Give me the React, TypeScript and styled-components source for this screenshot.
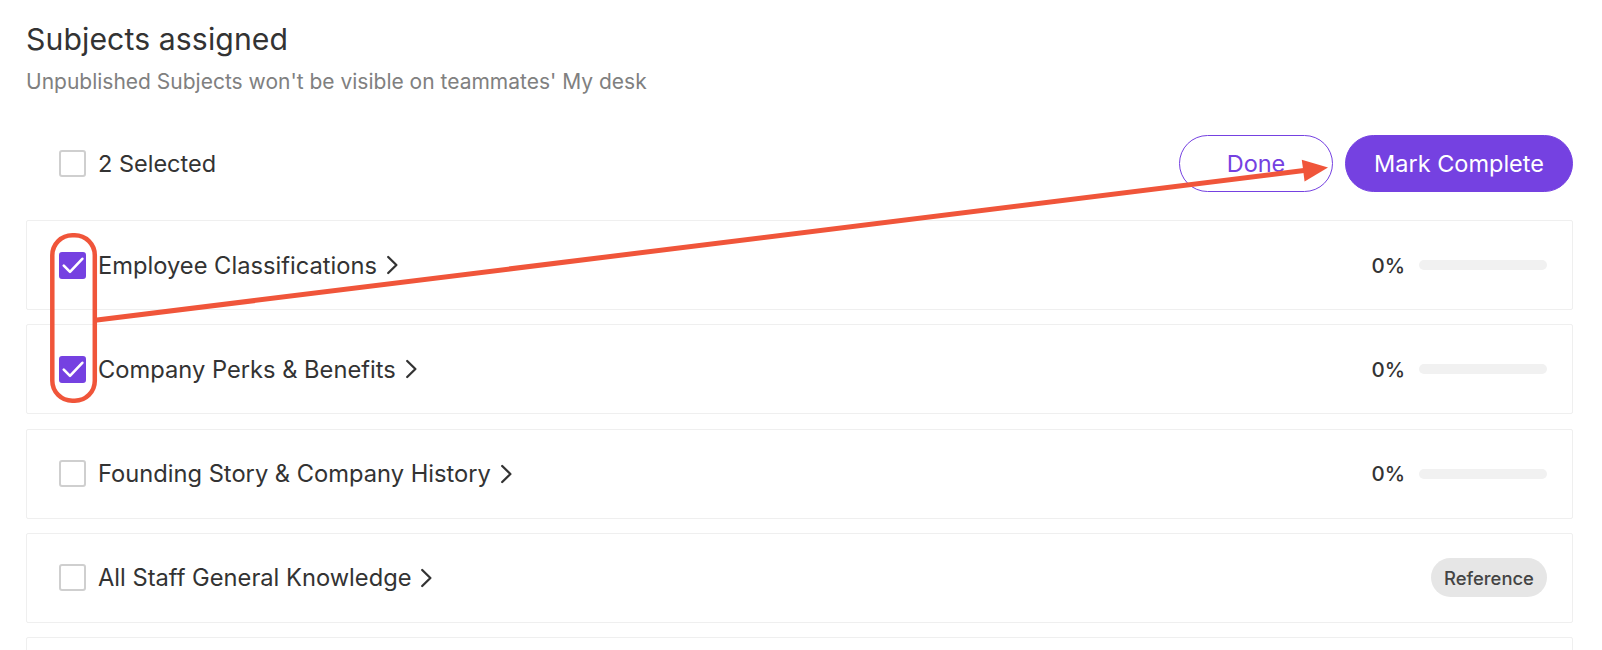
import React from "react";
import styled, { createGlobalStyle } from "styled-components";

const GlobalStyle = createGlobalStyle`
  html, body { margin: 0; padding: 0; background: #ffffff; }
  body { font-family: "Inter", "Noto Sans", sans-serif; color: #333333; }
  * { box-sizing: border-box; }
`;

const Page = styled.div`
  position: relative;
  padding: 21px 29px 0 26px;
  height: 650px;
  overflow: hidden;
`;

const Title = styled.h1`
  margin: 0;
  font-size: 30.2px;
  line-height: 36px;
  font-weight: 400;
  color: #333333;
  letter-spacing: 0.1px;
`;

const Subtitle = styled.p`
  margin: 11px 0 0;
  font-size: 21px;
  line-height: 28px;
  font-weight: 400;
  color: #808080;
`;

const Toolbar = styled.div`
  display: flex;
  align-items: center;
  justify-content: space-between;
  margin-top: 39px;
  padding-left: 33px;
  height: 57px;
`;

const SelectAll = styled.label`
  display: flex;
  align-items: center;
  gap: 12px;
  font-size: 23.5px;
  color: #333333;
`;

const Box = styled.span<{ $checked?: boolean }>`
  display: inline-flex;
  align-items: center;
  justify-content: center;
  flex: 0 0 auto;
  width: 27px;
  height: 27px;
  border-radius: 3px;
  border: 2px solid ${(p) => (p.$checked ? "#7541e1" : "#cfcfcf")};
  background: ${(p) => (p.$checked ? "#7541e1" : "#ffffff")};
`;

const Actions = styled.div`
  display: flex;
  align-items: center;
  gap: 12px;
`;

const PillButton = styled.button<{ $primary?: boolean }>`
  height: 57px;
  border-radius: 29px;
  font-family: inherit;
  font-size: 23.5px;
  font-weight: 400;
  cursor: pointer;
  border: 1px solid #7541e1;
  background: ${(p) => (p.$primary ? "#7541e1" : "#ffffff")};
  color: ${(p) => (p.$primary ? "#ffffff" : "#7541e1")};
  width: ${(p) => (p.$primary ? "228px" : "154px")};
  padding: 0;
`;

const List = styled.div`
  display: flex;
  flex-direction: column;
  gap: 14.3px;
  margin-top: 28px;
`;

const Row = styled.div`
  display: flex;
  align-items: center;
  justify-content: space-between;
  height: 90px;
  flex: 0 0 auto;
  border: 1px solid #efefef;
  border-radius: 2px;
  padding: 0 25px 0 32px;
`;

const RowMain = styled.div`
  display: flex;
  align-items: center;
  gap: 12px;
`;

const RowTitle = styled.span`
  display: inline-flex;
  align-items: center;
  gap: 9px;
  font-size: 23.7px;
  color: #333333;
`;

const Progress = styled.div`
  display: flex;
  align-items: center;
  gap: 14px;
`;

const Percent = styled.span`
  font-size: 20.5px;
  font-weight: 500;
  color: #333333;
`;

const Track = styled.div`
  width: 128px;
  height: 10px;
  border-radius: 5px;
  background: #f1f1f1;
`;

const Badge = styled.span`
  display: inline-flex;
  align-items: center;
  justify-content: center;
  width: 116px;
  height: 39px;
  border-radius: 20px;
  background: #e6e6e6;
  color: #444444;
  font-size: 18.4px;
  font-weight: 500;
`;

const Overlay = styled.svg`
  position: absolute;
  left: 0;
  top: 0;
  pointer-events: none;
`;

const Check = () => (
  <svg width="22" height="17" viewBox="0 0 22 17" fill="none">
    <path d="M1.8 8.6 L8 14.8 L20.3 1.8" stroke="#ffffff" strokeWidth="2.6" strokeLinecap="round" strokeLinejoin="round" />
  </svg>
);

const Chevron = () => (
  <svg width="13" height="20" viewBox="0 0 13 20" fill="none">
    <path d="M2.2 2 L10.4 10 L2.2 18" stroke="#333333" strokeWidth="2.3" strokeLinecap="round" strokeLinejoin="round" />
  </svg>
);

type Subject = { name: string; checked: boolean; kind: "progress" | "reference" };

const subjects: Subject[] = [
  { name: "Employee Classifications", checked: true, kind: "progress" },
  { name: "Company Perks & Benefits", checked: true, kind: "progress" },
  { name: "Founding Story & Company History", checked: false, kind: "progress" },
  { name: "All Staff General Knowledge", checked: false, kind: "reference" },
];

export default function App() {
  return (
    <>
      <GlobalStyle />
      <Page>
        <Title>Subjects assigned</Title>
        <Subtitle>Unpublished Subjects won't be visible on teammates' My desk</Subtitle>
        <Toolbar>
          <SelectAll>
            <Box />
            2 Selected
          </SelectAll>
          <Actions>
            <PillButton>Done</PillButton>
            <PillButton $primary>Mark Complete</PillButton>
          </Actions>
        </Toolbar>
        <List>
          {subjects.map((s) => (
            <Row key={s.name}>
              <RowMain>
                <Box $checked={s.checked}>{s.checked && <Check />}</Box>
                <RowTitle>
                  {s.name}
                  <Chevron />
                </RowTitle>
              </RowMain>
              {s.kind === "progress" ? (
                <Progress>
                  <Percent>0%</Percent>
                  <Track />
                </Progress>
              ) : (
                <Badge>Reference</Badge>
              )}
            </Row>
          ))}
          <Row />
        </List>
        <Overlay width="1602" height="650" viewBox="0 0 1602 650">
          <rect x="52.3" y="235.3" width="42.5" height="165.5" rx="20" fill="none" stroke="#f0553a" strokeWidth="4.5" />
          <line x1="95" y1="320.3" x2="1306" y2="170.3" stroke="#f0553a" strokeWidth="5" />
          <polygon points="1328,167.5 1301.8,159.7 1304.6,181.5" fill="#f0553a" />
        </Overlay>
      </Page>
    </>
  );
}
